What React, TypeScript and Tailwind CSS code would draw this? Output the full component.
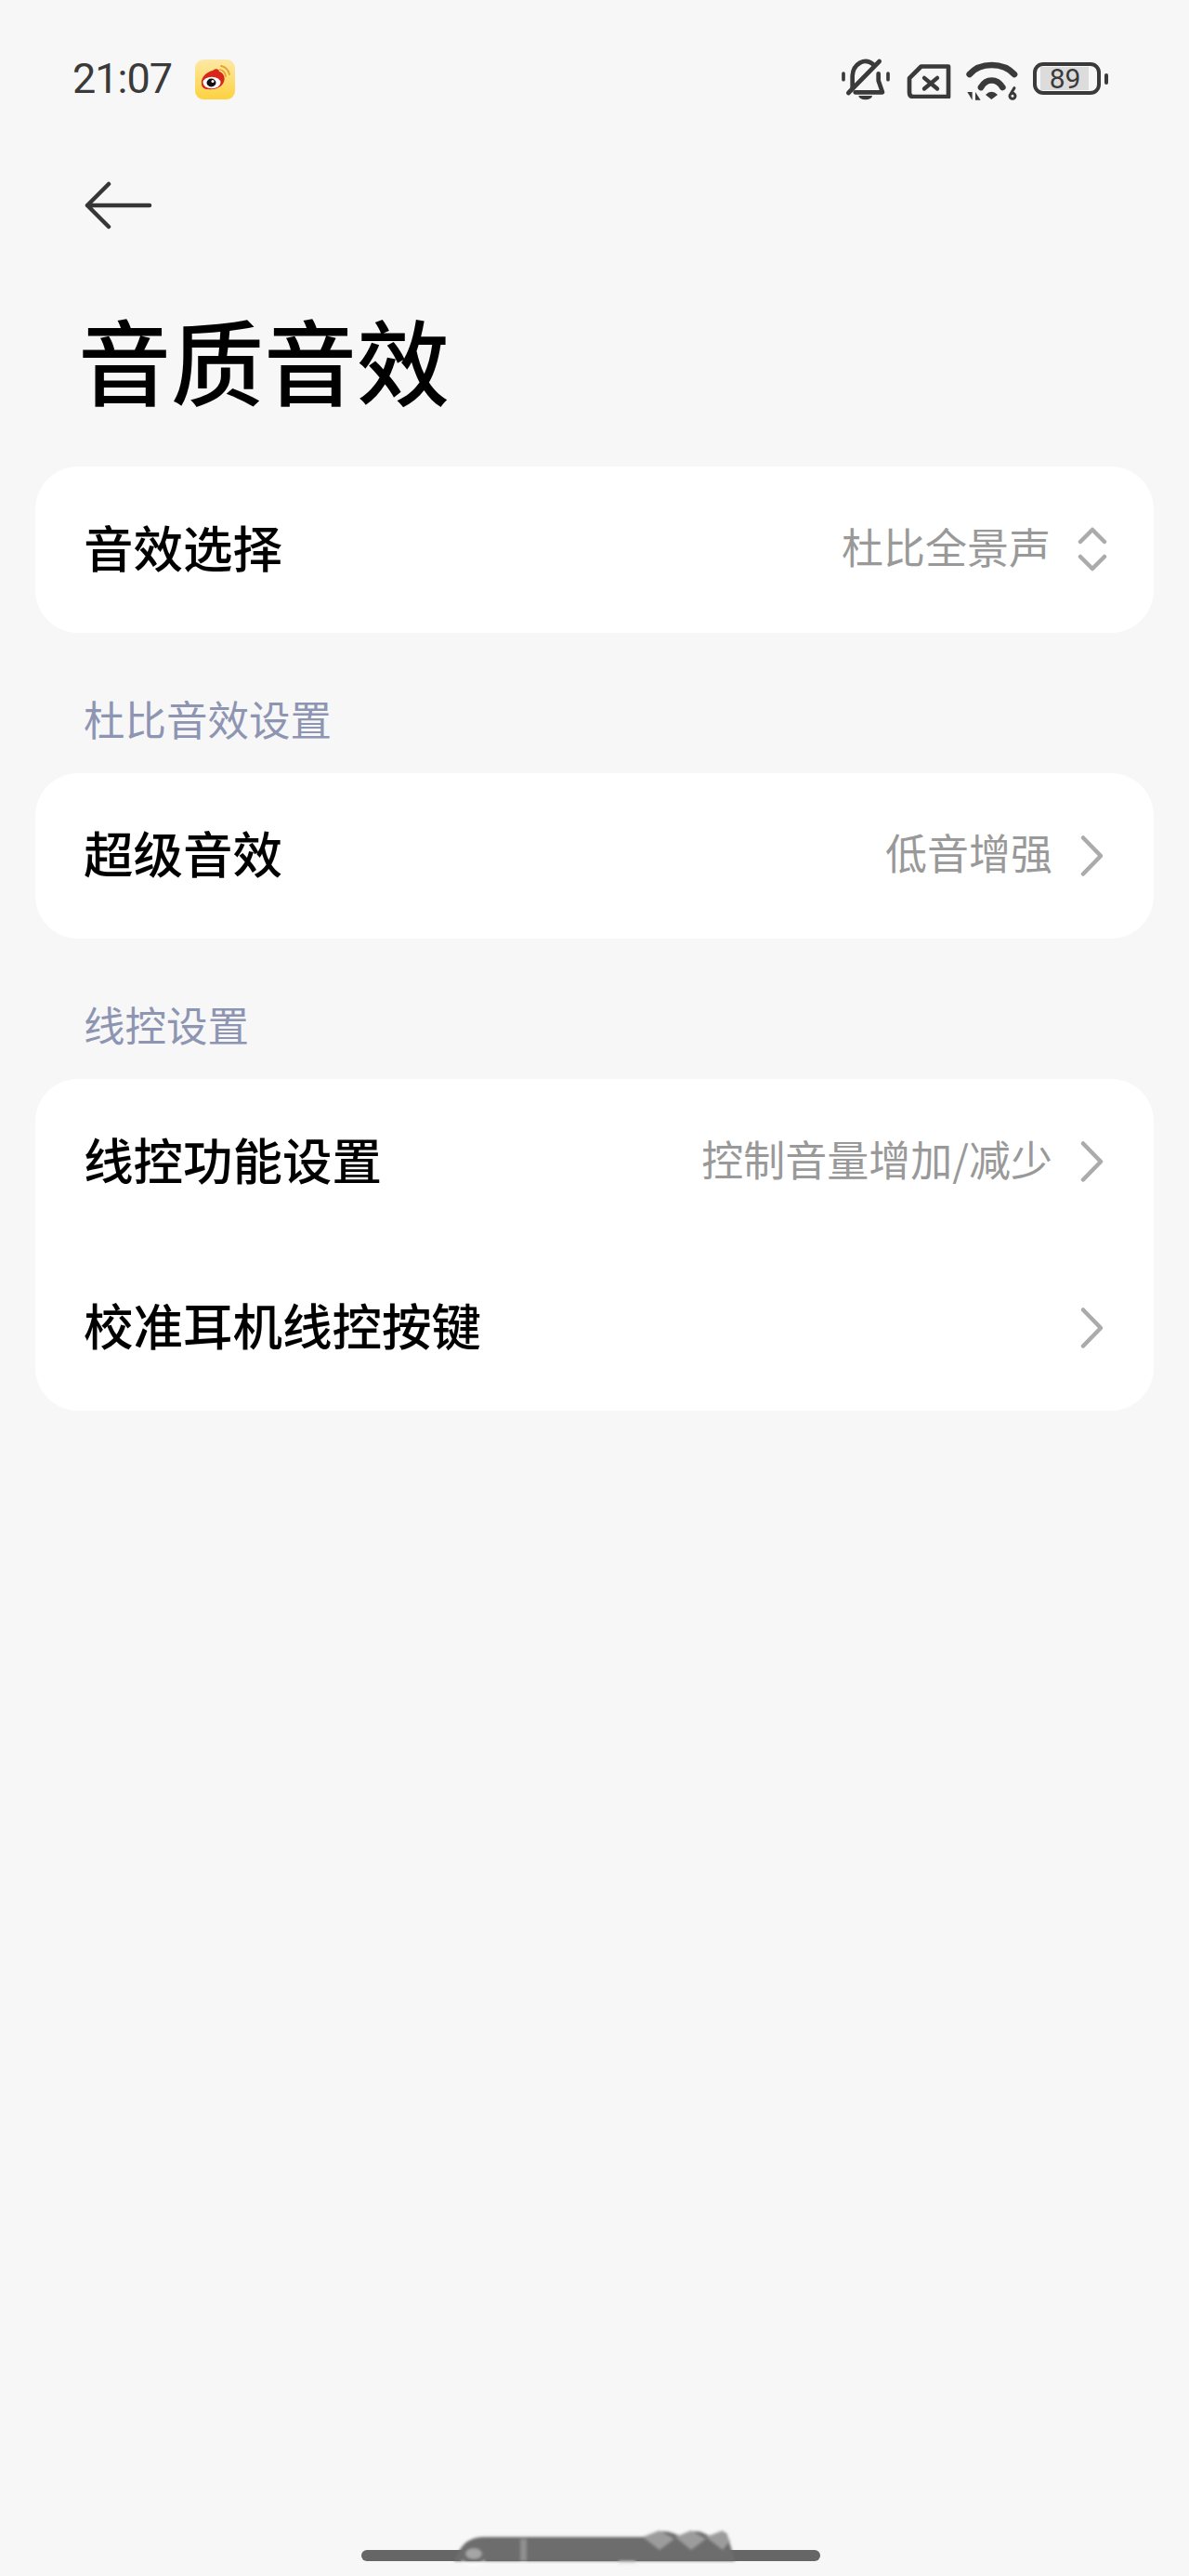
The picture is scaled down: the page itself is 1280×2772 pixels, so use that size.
import React from "react";

const cjk = { fontFamily: '"Noto Sans CJK SC", "Noto Sans", sans-serif' };

function Chevron() {
  return (
    <svg width="30" height="48" viewBox="0 0 30 48" fill="none" className="block ml-[29px]">
      <path d="M4 4.5 L23 24 L4 43.5" stroke="#ababab" strokeWidth="4.5" strokeLinecap="round" strokeLinejoin="round" />
    </svg>
  );
}

function UpDown() {
  return (
    <svg width="32" height="50" viewBox="0 0 32 50" fill="none" className="block ml-[29px] -mt-[1px]">
      <path d="M3 17 L16 4 L29 17 M3 33 L16 46 L29 33" stroke="#ababab" strokeWidth="4.5" strokeLinecap="round" strokeLinejoin="round" />
    </svg>
  );
}

function Row({ title, value, updown }: { title: string; value?: string; updown?: boolean }) {
  return (
    <div className="flex items-center justify-between h-[178.5px] pl-[52px] pr-[50px]">
      <span className="text-[53.5px] leading-[70px] pb-[7px] font-medium text-black" style={cjk}>{title}</span>
      <div className="flex items-center">
        {value && <span className="text-[45px] leading-[60px] pb-[7px] text-[#999999]" style={cjk}>{value}</span>}
        {updown ? <UpDown /> : <Chevron />}
      </div>
    </div>
  );
}

function Label({ children }: { children: string }) {
  return (
    <div className="pl-[90px] h-[151px] pt-[62px] box-border text-[44.5px] leading-[60px] text-[#8d95b3]" style={cjk}>
      {children}
    </div>
  );
}

function Weibo() {
  return (
    <svg width="43" height="43" viewBox="0 0 43 43" className="block">
      <defs>
        <linearGradient id="wb" x1="0" y1="0" x2="0" y2="1">
          <stop offset="0" stopColor="#fde9a6" />
          <stop offset="1" stopColor="#fdd23f" />
        </linearGradient>
      </defs>
      <rect width="43" height="43" rx="9" fill="url(#wb)" />
      <path d="M7 26 C6 19 13 13 19 12 C22 9 26 10 26 13 C30 14 33 19 31 24 C29 30 21 33 14 32 C10 32 7 30 7 26 Z" fill="#d9261c" />
      <ellipse cx="18" cy="25" rx="9.5" ry="6.2" fill="#fff" />
      <ellipse cx="17.5" cy="25" rx="5" ry="4.4" fill="#111" />
      <circle cx="19" cy="23.5" r="1.5" fill="#fff" />
      <path d="M27 11 A8 8 0 0 1 33 18 M28 7 A12 12 0 0 1 37 16" stroke="#e8a030" strokeWidth="1.8" fill="none" strokeLinecap="round" />
    </svg>
  );
}

function StatusIcons() {
  const c = "#3a3a3a";
  return (
    <div className="flex items-center">
      <svg width="54" height="46" viewBox="75 66 162 138" fill="none" className="block">
        <path d="M113 165 V125 A42 50 0 0 1 180 88" stroke={c} strokeWidth="14" strokeLinecap="round" strokeLinejoin="round" />
        <path d="M197 118 V140 L210 178 H122" stroke={c} strokeWidth="14" strokeLinecap="round" strokeLinejoin="round" />
        <path d="M200 78 L100 180" stroke={c} strokeWidth="14" strokeLinecap="round" />
        <path d="M133 189 H177 A22 13 0 0 1 133 189 Z" fill={c} />
        <path d="M84 117 V137 M228 117 V137" stroke={c} strokeWidth="11" strokeLinecap="round" />
      </svg>
      <svg width="50" height="39" viewBox="285 76.5 150 117" fill="none" className="block ml-[16px] mt-[3px]">
        <path d="M335 90 H423 V188 H312 Q297 188 297 173 V128 Z" stroke={c} strokeWidth="14" strokeLinejoin="round" />
        <path d="M345 127 L387 162 M387 127 L345 162" stroke={c} strokeWidth="13" strokeLinecap="round" />
      </svg>
      <svg width="56" height="42" viewBox="480 72 168 126" fill="none" className="block ml-[15px] mt-[3px]">
        <path d="M491 114 C525 74 600 74 636 114" stroke={c} strokeWidth="20" strokeLinecap="round" />
        <path d="M528 156 C545 126 580 126 598 156" stroke={c} strokeWidth="20" strokeLinecap="round" />
        <path d="M543 180 Q562 160 582 180 L562 195 Z" fill={c} />
        <path d="M484 171 H500 V197 Z M510 197 H527 L510 171 Z" fill={c} />
        <path d="M626 174 L636 158" stroke={c} strokeWidth="9" strokeLinecap="round" />
        <circle cx="630" cy="184" r="9" stroke={c} strokeWidth="9" />
      </svg>
      <div className="relative ml-[16px] -mt-[1px] w-[73px] h-[35px] rounded-[11px] border-[4px] border-[#3a3a3a] box-border">
        <div className="absolute left-[4px] top-[1px] bottom-[1px] w-[52px] bg-[#dcdcdc]" />
        <span className="absolute inset-0 flex items-center justify-center text-[30px] leading-none text-[#3a3a3a] pr-[3px]" style={{ fontFamily: '"Roboto", sans-serif' }}>89</span>
      </div>
      <div className="ml-[4px] w-[4.5px] h-[12px] rounded-[2px] bg-[#3a3a3a]" />
    </div>
  );
}

function Smudge() {
  return (
    <svg width="310" height="46" viewBox="0 0 310 46" className="absolute left-[482px] top-[2718px] block blur-[1.5px]">
      <path d="M7 38 C14 20 22 12 40 12 H210 C216 12 220 6 232 6 C244 6 248 12 254 12 C258 6 264 6 268 6 C276 6 280 12 286 12 C290 6 296 6 300 8 C304 18 306 28 309 38 H7 Z" fill="#6d6d6d" />
      <path d="M210 12 L228 5 L244 14 L228 26 Z M245 12 L262 5 L278 14 L262 26 Z M278 12 L296 5 L304 16 L296 26 Z" fill="#9c9c9c" />
      <rect x="78" y="14" width="7" height="24" fill="#8f8f8f" />
      <ellipse cx="28" cy="30" rx="9" ry="6" fill="#a5a5a5" />
      <path d="M15 38 Q27 46 40 38" stroke="#ffffff" strokeWidth="2" fill="none" />
      <rect x="184" y="38" width="18" height="3" fill="#e6e6e6" />
    </svg>
  );
}

export default function App() {
  return (
    <div className="relative w-[1280px] h-[2772px] overflow-hidden bg-[#f7f7f7]">
      <div className="flex items-center justify-between h-[44px] mt-[63px] pl-[78px] pr-[87px]">
        <div className="flex items-center">
          <span className="text-[45px] leading-[44px] tracking-[-1px] text-[#3a3a3a]" style={{ fontFamily: 'Roboto, sans-serif' }}>21:07</span>
          <div className="ml-[25px]"><Weibo /></div>
        </div>
        <StatusIcons />
      </div>

      <div className="pl-[91px] pt-[88px]">
        <svg width="74" height="52" viewBox="0 0 74 52" fill="none" className="block">
          <path d="M70 26 H3 M26 3 L3 26 L26 49" stroke="#363636" strokeWidth="4.5" strokeLinecap="round" strokeLinejoin="round" />
        </svg>
      </div>

      <h1 className="pl-[84px] mt-[71px] h-[136px] text-[100px] leading-[136px] font-medium text-black" style={cjk}>音质音效</h1>

      <div className="mx-[38px] mt-[48px] bg-white rounded-[46px]">
        <Row title="音效选择" value="杜比全景声" updown />
      </div>

      <Label>杜比音效设置</Label>
      <div className="mx-[38px] bg-white rounded-[46px]">
        <Row title="超级音效" value="低音增强" />
      </div>

      <Label>线控设置</Label>
      <div className="mx-[38px] bg-white rounded-[46px]">
        <Row title="线控功能设置" value="控制音量增加/减少" />
        <Row title="校准耳机线控按键" />
      </div>

      <div className="absolute left-[389px] top-[2744px] w-[494px] h-[12px] rounded-full bg-[#666666]" />
      <Smudge />
    </div>
  );
}
